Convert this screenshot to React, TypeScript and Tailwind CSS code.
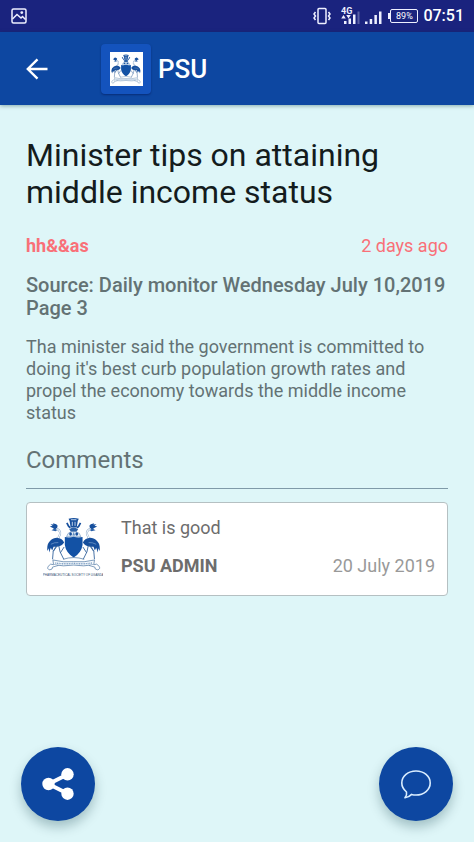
import { ReactNode } from 'react'

const comments = [
  { id: 1, text: 'That is good', author: 'PSU ADMIN', date: '20 July 2019' },
]

// One crane of the coat of arms, mirrored for the right hand side
function Crane() {
  return (
    <g>
      <path d="M61 64 L52 60 L60 58 L54 53 L63 54 L61 50 L71 53 L75 58 L73 65 L66 69 Z" fill="#164f9d" />
      <path d="M57 71 L66 66 L74 70 L69 74 Z" fill="#2c62a8" />
      <path d="M72 66 Q84 72 82 82 Q78 91 75 98" fill="none" stroke="#8da9c9" strokeWidth="6" />
      <path d="M72 66 Q84 72 82 82 Q78 91 75 98" fill="none" stroke="#fff" strokeWidth="3" />
      <path d="M48 108 Q56 95 72 93 Q88 94 94 107 Q87 119 72 119 L63 119 L59 130 L55 122 L50 136 L49 124 L45 132 Q43 116 48 108 Z" fill="#164f9d" />
      <path d="M55 112 Q66 106 77 107" fill="none" stroke="#9dbbe0" strokeWidth="1.5" />
      <path d="M71 116 L62 133 L60 156 M78 115 L82 134 L93 156 M62 133 L75 115 M83 137 L94 120" fill="none" stroke="#2a5c98" strokeWidth="2.5" />
    </g>
  )
}

function Crest({ className, showName = false }: { className?: string; showName?: boolean }) {
  return (
    <svg className={className} viewBox={showName ? '32 32 176 176' : '37 30 170 164'} role="img" aria-label="PSU crest">
      <Crane />
      <g transform="translate(243 0) scale(-1 1)">
        <Crane />
      </g>

      {/* drum, head dress and the two horns */}
      <path d="M107 37 Q122 33 137 37 L134 44 L131 63 H113 L110 44 Z" fill="#164f9d" />
      <path d="M114 40 H130 M118 46 V58 M126 46 V58" stroke="#d8e5f4" strokeWidth="2.5" />
      <path d="M102 49 L107 59 L112 64 M142 49 L137 59 L132 64" fill="none" stroke="#164f9d" strokeWidth="5" />
      <path d="M109 68 Q122 58 135 68 L130 75 H114 Z" fill="#2c62a8" />
      <path d="M101 90 Q103 78 115 75 H129 Q141 78 143 90 Z" fill="#e3edf6" stroke="#4c79ad" strokeWidth="1.5" />
      <ellipse cx="113" cy="82" rx="4" ry="5" fill="#164f9d" />
      <ellipse cx="131" cy="82" rx="4" ry="5" fill="#164f9d" />
      <path d="M122 75 L126 86 H118 Z" fill="#5f8cc0" />

      <path d="M96 91 Q110 94 122 90 Q134 94 148 91 V114 Q145 136 122 151 Q99 136 96 114 Z" fill="#1352a5" />

      <path d="M91 156 Q122 146 153 156" fill="none" stroke="#45709e" strokeWidth="2" />
      <path d="M61 158 Q91 166 122 163 Q153 166 183 158 L181 172 Q151 178 122 173 Q92 178 63 172 Z" fill="#f7fafc" stroke="#45709e" strokeWidth="2" />
      <path d="M68 167 Q95 171 122 168 Q149 171 176 167" fill="none" stroke="#7fa0c5" strokeWidth="4" strokeDasharray="3 2" />
      <path d="M63 172 Q54 166 47 177 Q43 185 52 187 Q61 186 60 179 L77 174 M181 172 Q190 166 197 177 Q201 185 192 187 Q183 186 184 179 L167 174" fill="#fff" stroke="#45709e" strokeWidth="2" />
      {showName && (
        <text x="121" y="206" textAnchor="middle" fontSize="9" fontFamily="Liberation Sans, sans-serif" fill="#344e70">
          PHARMACEUTICAL SOCIETY OF UGANDA
        </text>
      )}
    </svg>
  )
}

function StatusBar() {
  return (
    <div className="flex h-8 items-center justify-between bg-[#1a237e] pl-[11px] pr-2.5 text-white">
      <svg className="h-4 w-4" viewBox="0 0 16 16" fill="none" stroke="#eef0ff" strokeWidth="1.5" aria-label="Picture notification">
        <rect x="1" y="1" width="14" height="14" rx="1.5" />
        <path d="M1.5 11 L6 6.5 L10 10 L11.5 8.5 L14.5 11.5" />
        <circle cx="10.8" cy="4.6" r="0.7" fill="#eef0ff" />
      </svg>
      <div className="flex items-center">
        <svg className="mr-2.5 h-[18px] w-[18px]" viewBox="0 0 18 18" fill="none" stroke="#eef0ff" strokeWidth="1.5" aria-label="Vibrate">
          <rect x="5" y="1.5" width="8" height="15" rx="1" />
          <path d="M2.5 5 L1 7 L2.5 9 L1 11 L2.5 13 M15.5 5 L17 7 L15.5 9 L17 11 L15.5 13" />
        </svg>
        <svg className="mr-1 h-[18px] w-5" viewBox="0 0 20 18" fill="#eef0ff" aria-label="4G signal">
          <text x="0" y="7" fontSize="9" fontWeight="700" fontFamily="Roboto, sans-serif">4G</text>
          <path d="M2.5 8 L4.8 11.5 H0.2 Z M7.5 11.5 L5.2 8 H9.8 Z" />
          <path d="M3 14 h2.5 v3 h-2.5 Z M7.5 11.5 h2.5 v5.5 h-2.5 Z M12 7.5 h2.5 V17 h-2.5 Z" />
          <path d="M16.5 4.5 h2 V17 h-2 Z" opacity="0.3" />
        </svg>
        <svg className="mr-1.5 h-[18px] w-[17px]" viewBox="0 0 17 18" fill="#eef0ff" aria-label="Signal">
          <path d="M0 14.5 h2.5 v2.5 h-2.5 Z M4.7 12 h2.5 v5 h-2.5 Z M9.4 8 h2.5 v9 h-2.5 Z M14 4.5 h2.5 V17 h-2.5 Z" />
        </svg>
        <div className="mr-[5px] flex items-center">
          <span className="h-1.5 w-0.5 bg-[#eef0ff]" />
          <span className="flex h-3.5 w-7 items-center justify-center rounded-xs border border-[#eef0ff] text-[9px] leading-none">
            89%
          </span>
        </div>
        <span className="text-[16px] font-medium leading-5">07:51</span>
      </div>
    </div>
  )
}

function RoundButton({ label, children }: { label: string; children: ReactNode }) {
  return (
    <button
      type="button"
      aria-label={label}
      className="flex h-[74px] w-[74px] items-center justify-center rounded-full bg-[#0d47a1] text-white shadow-[0_6px_12px_rgba(0,50,60,0.28)]"
    >
      {children}
    </button>
  )
}

export default function App() {
  return (
    <div className="flex min-h-screen flex-col bg-[#def6f8] font-[Roboto,sans-serif]">
      <StatusBar />

      <header className="flex h-[73px] items-center bg-[#0d47a1] pl-6 text-white shadow-[0_1px_4px_rgba(0,60,60,0.4)]">
        <button type="button" aria-label="Back" className="mr-[51px] flex h-[26px] w-[26px] items-center justify-center">
          <svg className="h-[22px] w-[22px]" viewBox="0 0 22 22" fill="none" stroke="currentColor" strokeWidth="2.4">
            <path d="M21.5 11 H2 M11.5 1.3 L1.8 11 L11.5 20.7" />
          </svg>
        </button>
        <span className="flex h-[50px] w-[50px] items-center justify-center rounded bg-[#1453bd] shadow-[0_1px_2px_rgba(0,20,80,0.5)]">
          <span className="flex h-[34px] w-[33px] items-center justify-center bg-white">
            <Crest className="h-8 w-8" />
          </span>
        </span>
        <span className="ml-[7px] text-[26px] font-medium leading-8">PSU</span>
      </header>

      <main className="px-[26px] pt-8">
        <h1 className="text-[32px] leading-[37px] text-[#141c1d]">Minister tips on attaining middle income status</h1>

        <div className="mt-6 flex items-center justify-between text-[18px] leading-[22px] text-[#f97078]">
          <span className="font-bold">hh&amp;&amp;as</span>
          <span>2 days ago</span>
        </div>

        <h2 className="mt-[17px] text-[20px] font-medium leading-[23px] text-[#637274]">
          Source: Daily monitor Wednesday July 10,2019 Page 3
        </h2>

        <p className="mt-4 text-[18px] leading-[22px] text-[#637274]">
          Tha minister said the government is committed to doing it's best curb population growth rates and propel the
          economy towards the middle income status
        </p>

        <section className="mt-5">
          <h2 className="border-b border-[#7f9aa8] pb-3 text-2xl text-[#637274]">Comments</h2>
          <ul className="mt-[13px]">
            {comments.map((comment) => (
              <li key={comment.id} className="flex items-start rounded border border-[#b5c0c2] bg-white pb-[18px] pl-4 pr-3 pt-3.5">
                <Crest className="mr-[18px] h-[60px] w-[60px] shrink-0" showName />
                <div className="grow text-[18px] leading-[22px] text-[#6d6d6d]">
                  <p>{comment.text}</p>
                  <div className="mt-4 flex items-center justify-between">
                    <span className="font-bold">{comment.author}</span>
                    <span className="text-[#999]">{comment.date}</span>
                  </div>
                </div>
              </li>
            ))}
          </ul>
        </section>
      </main>

      <div className="mt-auto flex justify-between px-[21px] pb-[21px] pt-6">
        <RoundButton label="Share">
          <svg className="h-8 w-8" viewBox="0 0 32 32" fill="currentColor">
            <path d="M25.5 6.5 L6.5 16 L25.5 25.5" fill="none" stroke="currentColor" strokeWidth="4" />
            <circle cx="6.5" cy="16" r="6.2" />
            <circle cx="25.5" cy="6.3" r="6.2" />
            <circle cx="25.5" cy="25.7" r="6.2" />
          </svg>
        </RoundButton>
        <RoundButton label="Add comment">
          <svg className="h-8 w-8" viewBox="0 0 32 32" fill="none" stroke="#d9edff" strokeWidth="1.6" strokeLinejoin="round">
            <path d="M6.5 24 C3.5 21.5 1.8 18.5 1.8 15 C1.8 8.2 8.1 3 16 3 C23.9 3 30.2 8.2 30.2 15 C30.2 21.8 23.9 27 16 27 C14.5 27 13 26.8 11.6 26.4 C9.8 28.3 7.5 29.5 5 29.8 C6.3 28 7 26 6.5 24 Z" />
          </svg>
        </RoundButton>
      </div>
    </div>
  )
}
